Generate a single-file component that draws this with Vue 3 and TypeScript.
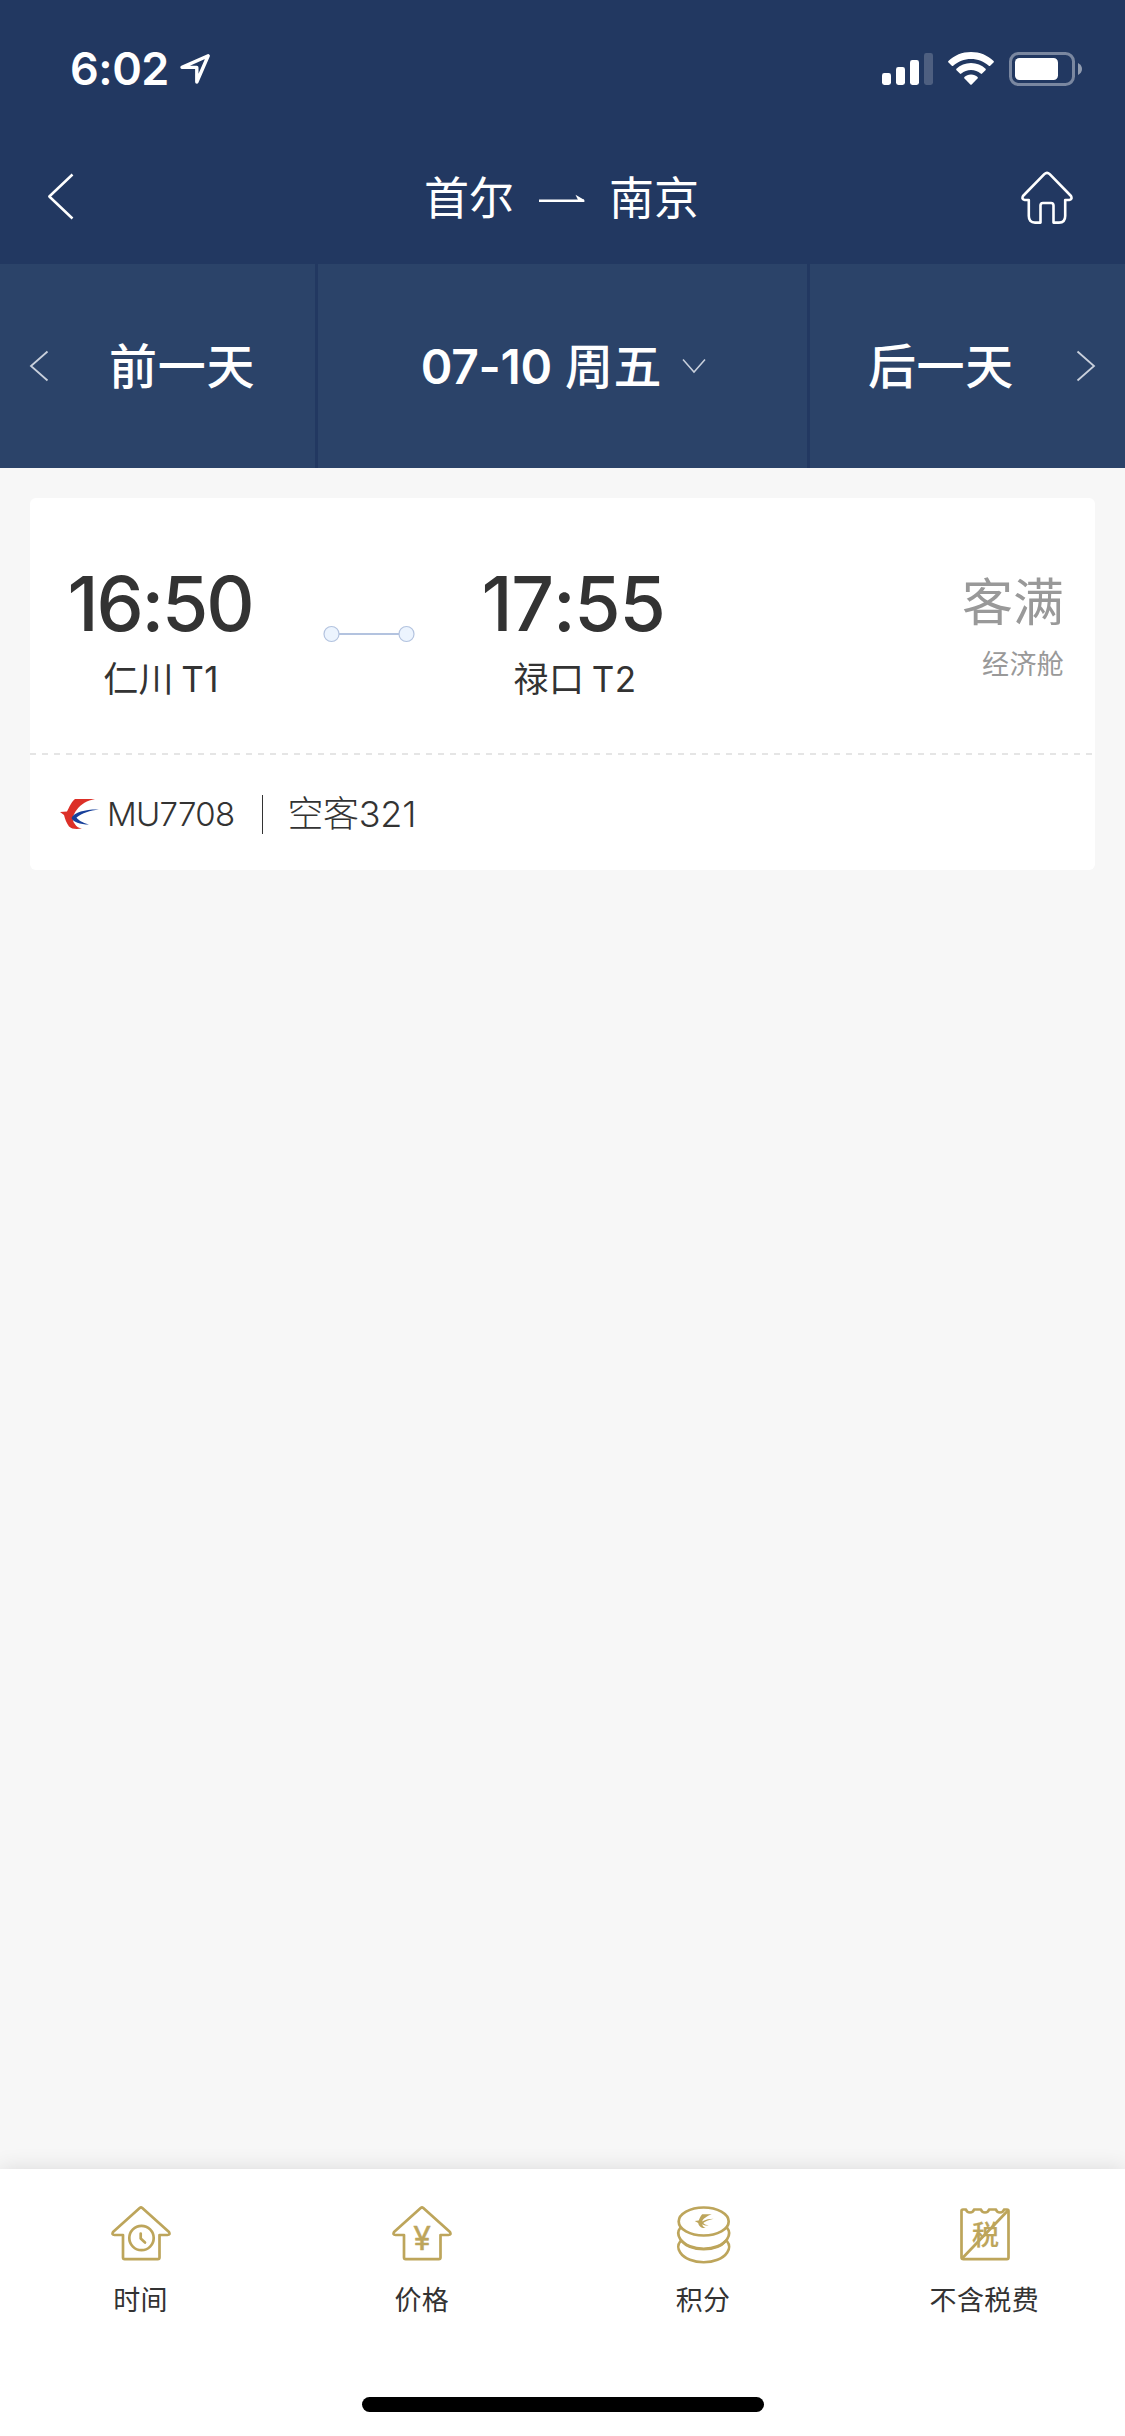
<script setup lang="ts">
interface Flight {
  departTime: string
  departPort: string
  arriveTime: string
  arrivePort: string
  status: string
  cabin: string
  flightNo: string
  aircraft: string
}

interface SortTab {
  key: 'time' | 'price' | 'points' | 'tax'
  label: string
}

const flights: Flight[] = [
  {
    departTime: '16:50',
    departPort: '仁川 T1',
    arriveTime: '17:55',
    arrivePort: '禄口 T2',
    status: '客满',
    cabin: '经济舱',
    flightNo: 'MU7708',
    aircraft: '空客321',
  },
]

const tabs: SortTab[] = [
  { key: 'time', label: '时间' },
  { key: 'price', label: '价格' },
  { key: 'points', label: '积分' },
  { key: 'tax', label: '不含税费' },
]
</script>

<template>
  <div class="screen">
    <header class="header">
      <div class="status-bar">
        <div class="clock">
          <span class="clock-text">6:02</span>
          <svg class="location" width="32" height="32" viewBox="0 0 32 32" fill="none" stroke="#fff" stroke-width="3.4" stroke-linejoin="round">
            <path d="M29.2 2.8 L3 14.4 H17.8 V29 Z" />
          </svg>
        </div>
        <div class="indicators">
          <svg width="51" height="34" viewBox="0 0 51 34" fill="#fff">
            <rect x="0" y="21" width="9" height="12" rx="2.4" />
            <rect x="14" y="15" width="9" height="18" rx="2.4" />
            <rect x="28" y="8" width="9" height="25" rx="2.4" />
            <rect x="42" y="1" width="9" height="32" rx="2.4" opacity=".2" />
          </svg>
          <svg class="wifi" width="46" height="34" viewBox="0 0 46 34" fill="#fff">
            <path d="M23 0 C31.8 0 39.8 3.3 45.6 9 Q46.2 9.8 45.5 10.5 L42.2 13.8 Q41.5 14.4 40.8 13.8 C36 9.4 29.8 7 23 7 S10 9.4 5.2 13.8 Q4.5 14.4 3.8 13.8 L.5 10.5 Q-.2 9.8 .4 9 C6.2 3.3 14.2 0 23 0Z" />
            <path d="M23 11 C28.7 11 33.7 13.2 37.6 16.8 Q38.2 17.5 37.5 18.2 L34.1 21.6 Q33.4 22.2 32.7 21.6 C30 19.2 26.7 18 23 18 S16 19.2 13.3 21.6 Q12.6 22.2 11.9 21.6 L8.5 18.2 Q7.8 17.5 8.4 16.8 C12.3 13.2 17.3 11 23 11Z" />
            <path d="M23 22.5 C25.8 22.5 27.9 23.4 29.6 24.9 Q30.2 25.6 29.5 26.4 L23.7 32.4 Q23 33.1 22.3 32.4 L16.5 26.4 Q15.8 25.6 16.4 24.9 C18.1 23.4 20.2 22.5 23 22.5Z" />
          </svg>
          <svg width="74" height="34" viewBox="0 0 74 34">
            <rect x="1.5" y="1.5" width="63" height="31" rx="8" fill="none" stroke="#fff" stroke-opacity=".4" stroke-width="3" />
            <rect x="6" y="6" width="43" height="22" rx="4.5" fill="#fff" />
            <path d="M69 11 Q73 13.2 73 17 T69 23Z" fill="#fff" fill-opacity=".5" />
          </svg>
        </div>
      </div>
      <nav class="nav">
        <svg class="back" width="28" height="48" viewBox="0 0 28 48" fill="none" stroke="#fff" stroke-width="2.5" stroke-linejoin="round">
          <path d="M25.5 2.5 L2.3 24.5 L25.5 46.5" />
        </svg>
        <h1 class="route">
          <span>首尔</span>
          <svg class="route-arrow" width="46" height="10" viewBox="0 0 46 10">
            <path d="M0 6.8 H45" stroke="#fff" stroke-width="2.4" />
            <path d="M36.5 .8 L45.4 6 V8 H40Z" fill="#fff" />
          </svg>
          <span>南京</span>
        </h1>
        <svg class="home" width="52" height="54" viewBox="0 0 52 54" fill="none" stroke="#fff" stroke-width="2.6" stroke-linejoin="round">
          <path d="M23.3 3.1 Q26 .7 28.7 3.1 L50 25 Q51.6 28.5 48.2 29 H44.2 V45 Q44.2 51.6 38 51.6 H32.5 V34.5 Q32.5 32 30 32 H22 Q19.5 32 19.5 34.5 V51.6 H14 Q7.8 51.6 7.8 45 V29 H3.8 Q.4 28.5 2 25 Z" />
        </svg>
      </nav>
    </header>

    <section class="date-bar">
      <div class="day prev">
        <svg width="20" height="32" viewBox="0 0 20 32" fill="none" stroke="#c9d0dc" stroke-width="1.8">
          <path d="M18.5 1.5 L2 16 L18.5 30.5" />
        </svg>
        <span class="day-text">前一天</span>
      </div>
      <div class="day current">
        <span class="day-text"><span class="date">07-10</span>周五</span>
        <svg width="24" height="16" viewBox="0 0 24 16" fill="none" stroke="#c9d0dc" stroke-width="1.5">
          <path d="M1 1.5 L12 14 L23 1.5" />
        </svg>
      </div>
      <div class="day next">
        <span class="day-text">后一天</span>
        <svg width="20" height="32" viewBox="0 0 20 32" fill="none" stroke="#c9d0dc" stroke-width="1.8">
          <path d="M1.5 1.5 L18 16 L1.5 30.5" />
        </svg>
      </div>
    </section>

    <main class="list">
      <article v-for="flight in flights" :key="flight.flightNo" class="card">
        <div class="schedule">
          <div class="stop depart">
            <strong>{{ flight.departTime }}</strong>
            <span>{{ flight.departPort }}</span>
          </div>
          <svg class="path-line" width="92" height="18" viewBox="0 0 92 18" fill="#ecf4fe" stroke="#b3c3df">
            <line x1="16" y1="9" x2="76" y2="9" stroke-width="2" />
            <circle cx="8.5" cy="9" r="7.5" stroke-width="1.2" />
            <circle cx="83.5" cy="9" r="7.5" stroke-width="1.2" />
          </svg>
          <div class="stop arrive">
            <strong>{{ flight.arriveTime }}</strong>
            <span>{{ flight.arrivePort }}</span>
          </div>
          <div class="fare">
            <span class="fare-status">{{ flight.status }}</span>
            <span class="fare-cabin">{{ flight.cabin }}</span>
          </div>
        </div>
        <svg width="1065" height="2" viewBox="0 0 1065 2">
          <line x1="0" y1="1" x2="1065" y2="1" stroke="#e5e5e5" stroke-width="2" stroke-dasharray="6 6" />
        </svg>
        <div class="meta">
          <svg width="40" height="32" viewBox="0 0 40 32">
            <path d="M15 1 H35 C27 2.5 21 6 17 11.5 C12 18 12 22 14.5 25.5 C16.5 29 19 30 22 30.5 C16 31.5 11.5 31 9 28.5 C6.5 25 5 21 4 17 L0 14 L7 13.5 C9 9.5 12 3 15 1Z" fill="#dc3028" />
            <path d="M39 11.5 C28 11 14 13.5 11.5 20 C13 24 20 26.5 29 26.5 C22 24.5 18 22 16.5 19.5 C22 15 30 12.5 39 11.5Z" fill="#17409a" />
          </svg>
          <span class="flight-no">{{ flight.flightNo }}</span>
          <i class="rule"></i>
          <span class="aircraft">{{ flight.aircraft }}</span>
        </div>
      </article>
    </main>

    <footer class="tab-bar">
      <div class="tabs">
        <div v-for="tab in tabs" :key="tab.key" class="tab">
          <svg width="60" height="60" viewBox="0 0 60 60" fill="none" stroke="#bda55b" stroke-width="2.7" stroke-linejoin="round" stroke-linecap="round">
            <template v-if="tab.key === 'time' || tab.key === 'price'">
              <path d="M28.7 2 Q30 1 31.3 2 L58 26 Q59.5 29 56.5 29 H48.5 V51.5 Q48.5 53.2 46.8 53.2 H13.7 Q12 53.2 12 51.5 V29 H3.5 Q.5 29 2 26 Z" />
              <template v-if="tab.key === 'time'">
                <circle cx="30.5" cy="32" r="12.2" />
                <path d="M29.7 27.5 V32.5 L34 36.5" />
              </template>
              <text v-else x="30" y="44" class="yen">¥</text>
            </template>
            <g v-else-if="tab.key === 'points'" transform="translate(.7 0)">
              <ellipse cx="30" cy="15.5" rx="25" ry="14" />
              <path d="M6.5 22 C4 25 4 29 6.5 33 C15 46 45 46 53.5 33 C56 29 56 25 53.5 22" />
              <path d="M6.5 35.5 C4 38.5 4 43 6.5 46.5 C15 59.5 45 59.5 53.5 46.5 C56 43 56 38.5 53.5 35.5" />
              <path d="M8 35 C17 46 43 46 52 35" />
              <path d="M28.5 8.2 H38 C33 10 29 13 28.5 15.5 C32 13.5 36 12.8 40 12.8 C35 14 31 15.8 29.5 17 C31 18.5 33 19 35 19.5 C32 19.8 30 19.2 28.5 18.2 C29 20.5 30.5 21.5 32 22 C27.5 22.5 25 20 24.5 17 L21 15 L25 14.5 C26 12 27 9.5 28.5 8.2Z" fill="#bda55b" stroke="none" />
            </g>
            <g v-else transform="translate(1 0)">
              <path d="M11 3.5 C12 7.5 18 7.5 19 3.5 H26 C27 7.5 33 7.5 34 3.5 H41 C42 7.5 48 7.5 49 3.5 H52 Q53.5 3.5 53.5 5 V51.5 Q53.5 53.2 52 53.2 H8.5 Q6.5 53.2 6.5 51.5 V5 Q6.5 3.5 8 3.5 Z" />
              <path d="M52.5 5 L7.5 52" />
              <text x="30.5" y="38.5" class="tax">税</text>
            </g>
          </svg>
          <span>{{ tab.label }}</span>
        </div>
      </div>
      <div class="home-indicator"></div>
    </footer>
  </div>
</template>

<style>
body {
  margin: 0;
}
</style>

<style scoped>
.screen {
  display: flex;
  flex-direction: column;
  width: 1125px;
  height: 2436px;
  overflow: hidden;
  background: #f7f7f7;
  color: #333;
  font-family: Inter, "Noto Sans CJK SC", sans-serif;
}

svg {
  display: block;
  flex: none;
}

.header {
  height: 264px;
  background: #223861;
  color: #fff;
}

.status-bar {
  display: flex;
  justify-content: space-between;
  height: 132px;
  padding: 0 42px 0 70px;
  box-sizing: border-box;
}

.clock {
  display: flex;
}

.clock-text {
  width: 109px;
  margin-top: 44px;
  font-size: 45px;
  font-weight: 600;
  line-height: 50px;
  letter-spacing: -0.5px;
  white-space: nowrap;
}

.location {
  margin-top: 53px;
}

.indicators {
  display: flex;
  margin-top: 52px;
}

.wifi {
  margin: 0 15px;
}

.nav {
  display: flex;
  align-items: flex-start;
  justify-content: space-between;
  height: 132px;
  padding: 0 52px 0 47px;
}

.back {
  margin-top: 40px;
  margin-right: 27px;
}

.route {
  display: flex;
  align-items: center;
  margin: 37px 0 0;
  font-size: 45px;
  font-weight: 400;
  line-height: 60px;
}

.route-arrow {
  margin: 0 24px 0 25px;
}

.home {
  margin-top: 39px;
}

.date-bar {
  display: grid;
  grid-template-columns: 315px 489px 315px;
  column-gap: 3px;
  height: 204px;
  background: #223861;
}

.day {
  display: flex;
  align-items: center;
  background: #2b4369;
  color: #fff;
  font-size: 48px;
  font-weight: 500;
  line-height: 60px;
  letter-spacing: 0.7px;
  white-space: nowrap;
}

.day-text {
  padding-top: 2px;
}

.prev {
  padding-left: 29px;
  gap: 60px;
}

.current {
  justify-content: center;
  padding-left: 2px;
  gap: 20px;
}

.date {
  margin-right: 13px;
  font-weight: 600;
  letter-spacing: -0.3px;
}

.next {
  justify-content: flex-end;
  padding-right: 29px;
  gap: 62px;
}

.list {
  flex: 1;
  padding: 30px;
}

.card {
  height: 372px;
  border-radius: 6px;
  background: #fff;
}

.schedule {
  display: flex;
  height: 255px;
}

.stop {
  display: flex;
  flex-direction: column;
  align-items: center;
  width: 200px;
  padding-top: 61px;
}

.stop strong {
  font-size: 75px;
  font-weight: 500;
  line-height: 90px;
  font-kerning: none;
  font-feature-settings: "calt" 0;
}

.stop span {
  margin-top: 3px;
  font-size: 35px;
  line-height: 54px;
  letter-spacing: 0.4px;
  word-spacing: -3px;
  white-space: nowrap;
}

.depart {
  margin-left: 31px;
}

.depart strong {
  margin-right: 2px;
  letter-spacing: -2.2px;
}

.path-line {
  margin: 127px 53px 0 62px;
}

.arrive {
  margin-left: 7px;
}

.arrive strong {
  margin-right: 4px;
  letter-spacing: -1.3px;
}

.fare {
  display: flex;
  flex: 1;
  flex-direction: column;
  align-items: flex-end;
  padding: 72px 31px 0 0;
  color: #999;
}

.fare-status {
  font-size: 51px;
  line-height: 66px;
}

.fare-cabin {
  margin-top: 9px;
  font-size: 27px;
  line-height: 40px;
  letter-spacing: 0.3px;
}

.meta {
  display: flex;
  align-items: center;
  height: 120px;
  padding: 0 30px;
  margin-top: -1px;
  font-weight: 300;
}

.flight-no {
  margin-left: 7px;
  font-size: 33px;
  line-height: 54px;
  letter-spacing: -0.7px;
}

.rule {
  width: 1px;
  height: 39px;
  margin: 0 24px 0 28px;
  background: #333;
}

.aircraft {
  font-size: 36px;
  line-height: 54px;
  letter-spacing: -0.3px;
}

.tab-bar {
  display: flex;
  flex-direction: column;
  align-items: center;
  justify-content: space-between;
  height: 267px;
  padding-bottom: 24px;
  box-sizing: border-box;
  background: #fff;
  box-shadow: 0 0 21px rgba(0, 0, 0, 0.12);
}

.tabs {
  display: grid;
  grid-template-columns: repeat(4, 1fr);
  width: 100%;
}

.tab {
  display: flex;
  flex-direction: column;
  align-items: center;
  padding-top: 37px;
  font-size: 27px;
  line-height: 40px;
  letter-spacing: 0.4px;
}

.tab > span {
  margin-top: 15px;
}

.yen,
.tax {
  fill: #bda55b;
  text-anchor: middle;
  letter-spacing: 0;
}

.yen {
  font-size: 32px;
  font-weight: 400;
  stroke-width: 0.5px;
}

.tax {
  font-size: 27px;
  font-weight: 500;
  stroke-width: 0.2px;
}

.home-indicator {
  width: 402px;
  height: 15px;
  border-radius: 8px;
  background: #000;
}
</style>
